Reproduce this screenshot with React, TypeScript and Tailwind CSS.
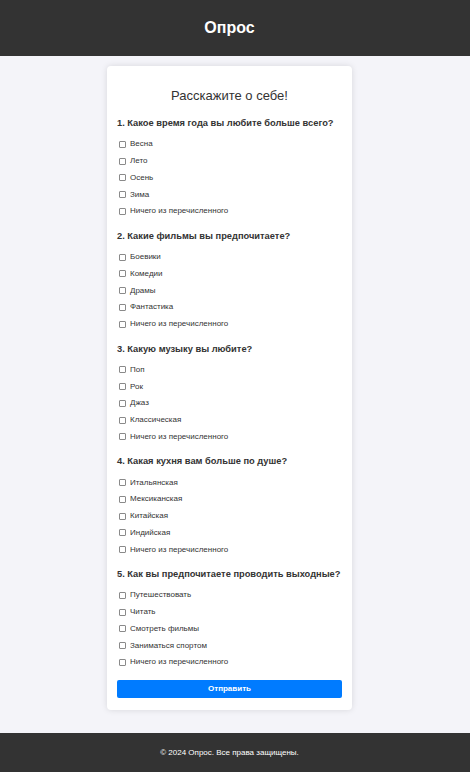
import React from "react";

const questions: { q: string; opts: string[] }[] = [
  { q: "1. Какое время года вы любите больше всего?", opts: ["Весна", "Лето", "Осень", "Зима", "Ничего из перечисленного"] },
  { q: "2. Какие фильмы вы предпочитаете?", opts: ["Боевики", "Комедии", "Драмы", "Фантастика", "Ничего из перечисленного"] },
  { q: "3. Какую музыку вы любите?", opts: ["Поп", "Рок", "Джаз", "Классическая", "Ничего из перечисленного"] },
  { q: "4. Какая кухня вам больше по душе?", opts: ["Итальянская", "Мексиканская", "Китайская", "Индийская", "Ничего из перечисленного"] },
  { q: "5. Как вы предпочитаете проводить выходные?", opts: ["Путешествовать", "Читать", "Смотреть фильмы", "Заниматься спортом", "Ничего из перечисленного"] },
];

export default function App() {
  return (
    <div className="min-h-[772px] flex flex-col bg-[#f4f4f9] text-[#333]" style={{ fontFamily: '"Liberation Sans", Arial, sans-serif' }}>
      <header className="h-[56px] bg-[#333] flex items-center justify-center pr-[11px]">
        <h1 className="text-white font-bold text-[16px] leading-none">Опрос</h1>
      </header>
      <main className="flex-1 flex justify-center items-start pt-[10px] pr-[11px]">
        <div className="w-[245px] bg-white rounded-[4px] shadow-[0_0_6px_rgba(0,0,0,0.12)] px-[10px] pt-[22px] pb-[12px]">
          <h2 className="text-center text-[13px] leading-[16px] text-[#333] mb-[13px]">Расскажите о себе!</h2>
          {questions.map((s, i) => (
            <div key={i} className={i < questions.length - 1 ? "mb-[10px]" : ""}>
              <div className="font-bold text-[9.3px] leading-[12px] text-[#333] mb-[7px] whitespace-nowrap">{s.q}</div>
              {s.opts.map((o) => (
                <label key={o} className="flex items-center h-[16.75px] pl-[2px] text-[8px] text-[#333]">
                  <span className="w-[7px] h-[7px] border border-[#8a8a8a] rounded-[1px] mr-[4px] bg-white" />
                  {o}
                </label>
              ))}
            </div>
          ))}
          <button className="w-full h-[18px] bg-[#007bff] text-white font-bold text-[8px] rounded-[2px] mt-[9px] block">Отправить</button>
        </div>
      </main>
      <footer className="h-[39px] bg-[#333] flex items-center justify-center mt-[23px] pr-[11px]">
        <span className="text-white text-[8px]">© 2024 Опрос. Все права защищены.</span>
      </footer>
    </div>
  );
}
